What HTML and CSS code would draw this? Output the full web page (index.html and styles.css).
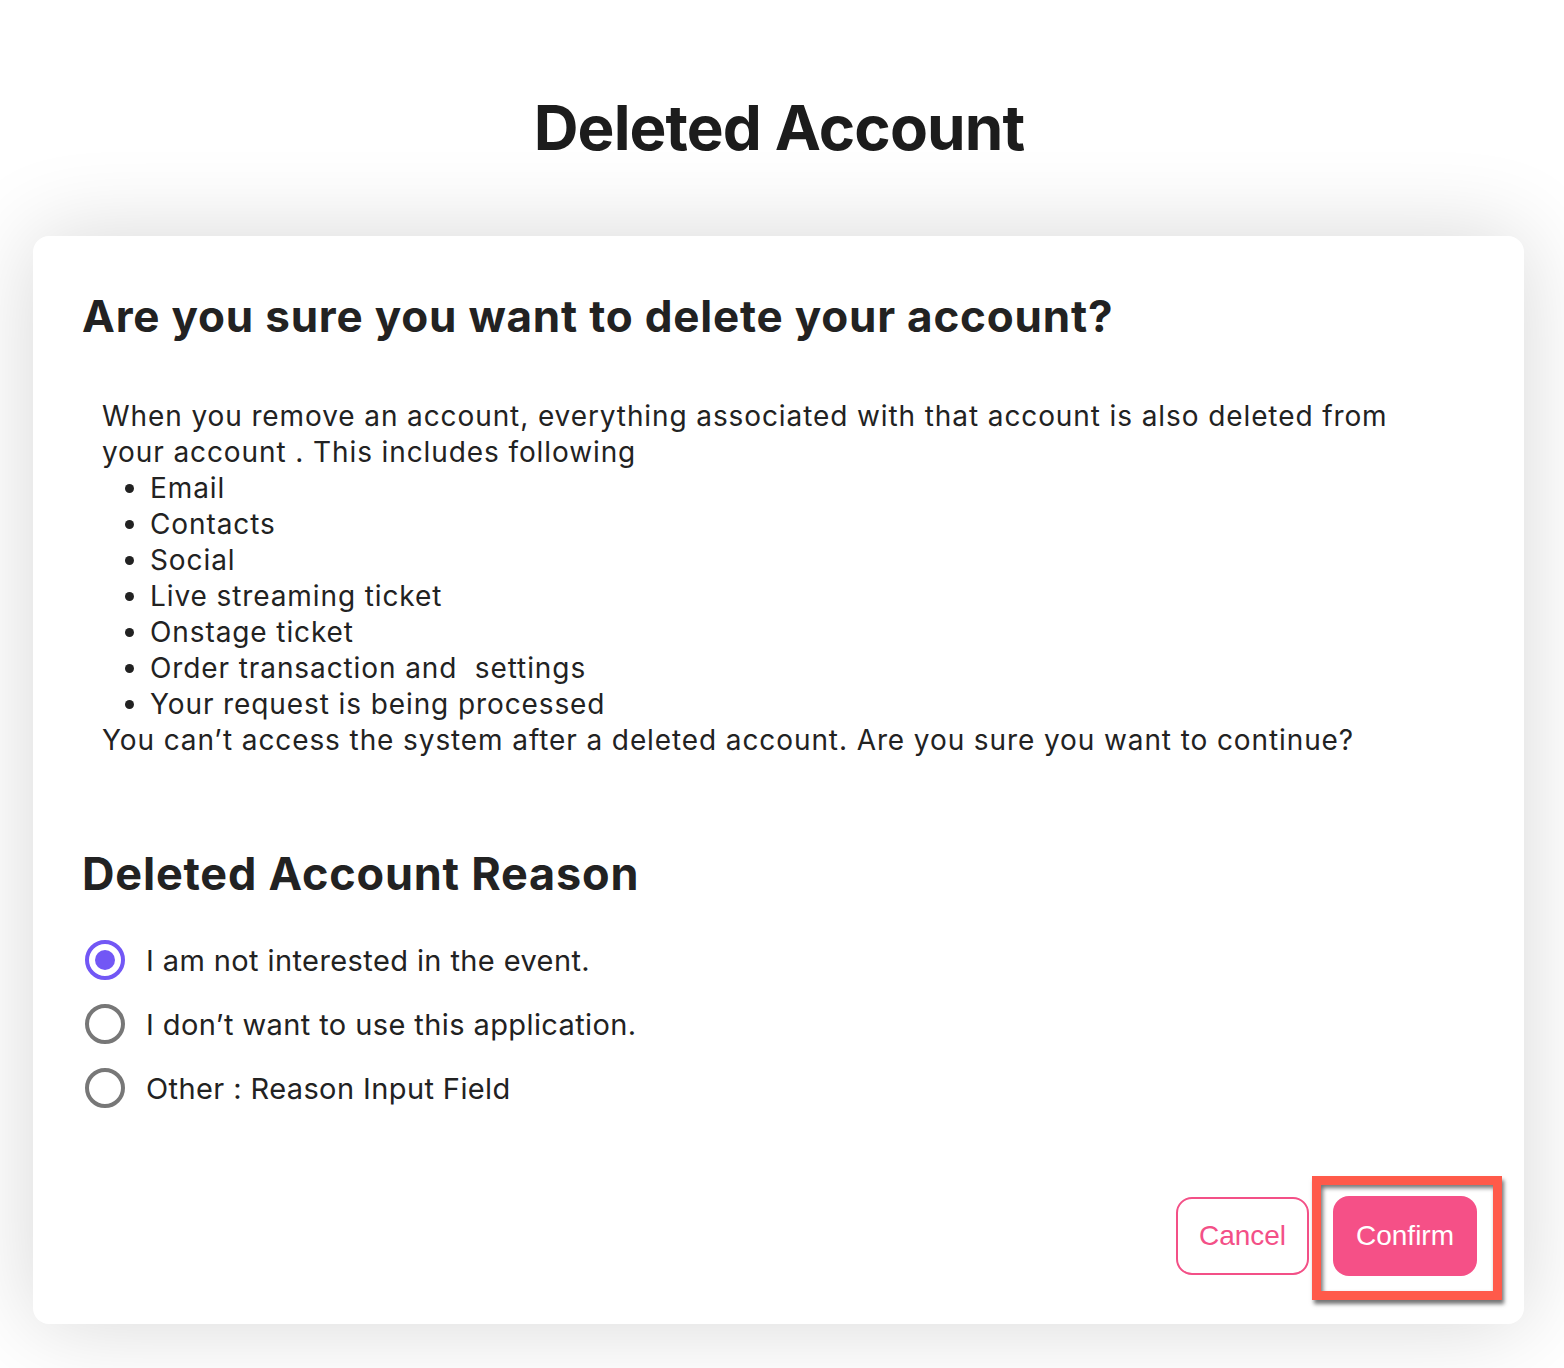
FILE: index.html
```html
<!DOCTYPE html>
<html lang="en">
<head>
<meta charset="utf-8">
<title>Deleted Account</title>
<link rel="stylesheet" href="styles.css">
</head>
<body>
<header class="page-header">
  <h1 class="page-title">Deleted Account</h1>
</header>
<main class="card">
  <h2 class="card-title">Are you sure you want to delete your account?</h2>
  <div class="notice">
    <p class="notice-text">When you remove an account, everything associated with that account is also deleted from your account . This includes following</p>
    <ul class="notice-list">
      <li>Email</li>
      <li>Contacts</li>
      <li>Social</li>
      <li>Live streaming ticket</li>
      <li>Onstage ticket</li>
      <li>Order transaction and&nbsp; settings</li>
      <li>Your request is being processed</li>
    </ul>
    <p class="notice-text">You can’t access the system after a deleted account. Are you sure you want to continue?</p>
  </div>
  <h2 class="reason-title">Deleted Account Reason</h2>
  <div class="reasons">
    <label class="reason"><span class="radio checked"></span><span class="reason-label">I am not interested in the event.</span></label>
    <label class="reason"><span class="radio"></span><span class="reason-label">I don’t want to use this application.</span></label>
    <label class="reason"><span class="radio"></span><span class="reason-label">Other : Reason Input Field</span></label>
  </div>
  <div class="actions">
    <button class="btn btn-cancel">Cancel</button>
    <div class="highlight-wrap">
      <button class="btn btn-confirm">Confirm</button>
      <span class="highlight"></span>
    </div>
  </div>
</main>
</body>
</html>
```
FILE: styles.css
```css
* { box-sizing: border-box; }
html, body { margin: 0; padding: 0; background: #ffffff; }
body {
  font-family: Inter, "Noto Sans", sans-serif;
  color: #222222;
  width: 1564px;
  height: 1368px;
  overflow: hidden;
}
.page-header {
  height: 236px;
  display: flex;
  justify-content: center;
  align-items: flex-start;
  padding: 88px 6px 0 0;
}
.page-title {
  margin: 0;
  font-size: 62px;
  line-height: 80px;
  font-weight: 700;
  letter-spacing: -0.9px;
  color: #1c1c1c;
}
.card {
  margin: 0 40px 0 33px;
  height: 1088px;
  background: #fff;
  border-radius: 16px;
  box-shadow: 0 0 90px rgba(0,0,0,0.16);
  padding: 52px 47px 48px 49px;
  display: flex;
  flex-direction: column;
}
.card-title, .reason-title {
  margin: 0;
  font-size: 44px;
  line-height: 56px;
  font-weight: 700;
  letter-spacing: 0.8px;
  color: #222;
}
.notice {
  margin: 54px 0 0 20px;
  max-width: 1330px;
  font-size: 28px;
  line-height: 36px;
  letter-spacing: 0.9px;
}
.notice-text { margin: 0; }
.notice-list { margin: 0; padding-left: 48px; }
.reason-title {
  margin-top: 88px;
  font-size: 45px;
}
.reasons {
  margin-top: 38px;
  display: flex;
  flex-direction: column;
  gap: 24px;
}
.reason {
  display: flex;
  align-items: center;
  gap: 21px;
  height: 40px;
  font-size: 29px;
  letter-spacing: 0.4px;
}
.radio {
  width: 40px;
  height: 40px;
  border-radius: 50%;
  border: 4px solid #777777;
  margin-left: 3px;
  flex: none;
  position: relative;
}
.radio.checked {
  border-color: #7257f5;
}
.radio.checked::after {
  content: "";
  position: absolute;
  left: 6px; top: 6px;
  width: 20px; height: 20px;
  border-radius: 50%;
  background: #7257f5;
}
.actions {
  margin-top: auto;
  display: flex;
  justify-content: flex-end;
  align-items: center;
  gap: 24px;
}
.btn {
  font-family: "Liberation Sans", Arial, sans-serif;
  font-size: 28px;
  border-radius: 16px;
  height: 78px;
  cursor: pointer;
}
.btn-cancel {
  width: 133px;
  background: #fff;
  color: #f35087;
  border: 2px solid #f35087;
}
.btn-confirm {
  width: 144px;
  height: 80px;
  background: #f55087;
  color: #fff;
  border: none;
}
.highlight-wrap { position: relative; }
.highlight {
  position: absolute;
  left: -21px; top: -20px; right: -25px; bottom: -24px;
  border: 9px solid #ff5a4a;
  box-shadow: 2px 4px 4px rgba(0,0,0,0.55), inset 2px 3px 4px rgba(0,0,0,0.55);
  pointer-events: none;
}
```
